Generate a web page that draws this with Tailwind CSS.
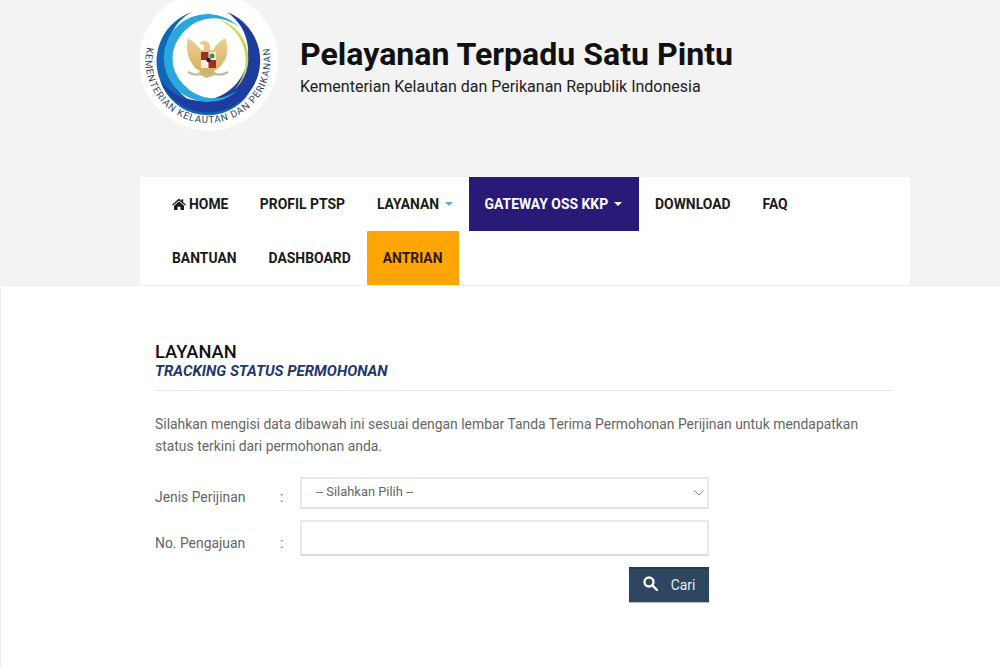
<!DOCTYPE html>
<html>
<head>
<meta charset="utf-8">
<script src="https://cdn.jsdelivr.net/npm/@tailwindcss/browser@4"></script>
</head>
<body class="font-['Roboto',sans-serif] bg-white overflow-hidden">
<div class="w-[1000px] h-[667px] overflow-hidden flex flex-col">
  <div class="bg-[#f3f3f3] h-[285px] shrink-0 px-[140px]">
    <div class="h-[177px] flex items-start">
      <svg class="w-[138px] h-[140px] -mt-[9px] shrink-0" viewBox="140 -9 138 140">
        <defs>
          <path id="arc" d="M 147 47 A 62.5 62.5 0 1 0 269 47"/>
          <linearGradient id="gold" x1="0" y1="0" x2="0" y2="1"><stop offset="0" stop-color="#ecd092"/><stop offset="1" stop-color="#d3aa58"/></linearGradient>
        </defs>
        <circle cx="208.500" cy="61" r="69.500" fill="#fff"/>
        <path d="M 192 12 A 52 52 0 0 0 160 80 A 50 50 0 0 0 250 92 A 47 47 0 0 1 168 62 A 46 46 0 0 1 192 12 Z" fill="#1267b5"/>
        <path d="M 227 12 A 52 52 0 1 1 160 80 A 48.500 48.500 0 1 0 227 12 Z" fill="#1d3c9e"/>
        <path d="M 240 28 A 44 44 0 1 0 238 90 A 40 40 0 1 1 240 28 Z" fill="#2ba7e0"/>
        <path d="M 217 19 A 41 41 0 0 1 234 90 A 44 44 0 0 0 217 19 Z" fill="#c6d84c"/>
        <circle cx="208.500" cy="58.500" r="36" fill="#fff"/>
        <path d="M205 41 C202 40 200 42 200 44 L204 45 L204 50 L201 50 C198 46 193 41 188 38 C186 46 187 56 191 62 L195 68 L200 71 L198 74 L207 78 L217 74 L214 71 L220 67 L225 60 C228 53 228 45 225 38 C220 41 215 46 213 50 L210 50 C211 45 209 41 205 41Z" fill="url(#gold)"/>
        <path d="M188 72 Q194 76 201 74 Q208 77 215 74 Q222 76 228 72" fill="none" stroke="#b9bda0" stroke-width="2.200"/>
        <rect x="201" y="52" width="15" height="16" fill="#f6eddc"/>
        <rect x="201" y="52" width="7.500" height="8" fill="#a32a2a"/>
        <rect x="208.500" y="60" width="7.500" height="8" fill="#a32a2a"/>
        <circle cx="212" cy="56" r="2.500" fill="#3f8f4f"/>
        <circle cx="208.500" cy="60" r="2.200" fill="#222"/>
        <text font-family="Roboto, sans-serif" font-size="9.800" fill="#33475f"><textPath href="#arc" startOffset="0" textLength="222" lengthAdjust="spacing">KEMENTERIAN KELAUTAN DAN PERIKANAN</textPath></text>
      </svg>
      <div class="ml-[22px] mt-[36px]">
        <h1 class="text-[32.100px] leading-[36px] font-bold text-[#111]">Pelayanan Terpadu Satu Pintu</h1>
        <p class="text-[16px] leading-[20px] mt-[5px] text-[#222]">Kementerian Kelautan dan Perikanan Republik Indonesia</p>
      </div>
    </div>
    <nav class="bg-white h-[108px] w-[770px] text-[13.900px] font-bold text-[#1a1a1a] flex flex-col shadow-[0_1px_1px_rgba(0,0,0,.04)]">
      <div class="flex h-[54px] items-stretch">
        <a class="pl-[32px] pr-[16px] flex items-center gap-[3px]">
          <svg class="w-[14px] h-[12px]" viewBox="0 0 14 12" fill="#1a1a1a"><path d="M7 0.500 L9.500 2.700 V1.200 H11.200 V4.200 L14 6.700 L13.100 7.600 L7 2.400 L0.900 7.600 L0 6.700Z"/><path d="M7 3.500 L12 7.700 V12 H8.500 V8.700 H5.500 V12 H2 V7.700Z"/></svg>
          HOME</a>
        <a class="pl-[15.500px] pr-[16px] flex items-center">PROFIL PTSP</a>
        <a class="px-[16px] flex items-center gap-[5.500px]">LAYANAN <span class="w-0 h-0 border-x-[4.500px] border-x-transparent border-t-[4px] border-t-[#5aa9d6]"></span></a>
        <a class="pl-[16px] pr-[17px] flex items-center gap-[6px] bg-[#2a1a78] text-white">GATEWAY OSS KKP <span class="w-0 h-0 border-x-[4.500px] border-x-transparent border-t-[4px] border-t-white"></span></a>
        <a class="px-[16px] flex items-center">DOWNLOAD</a>
        <a class="px-[16px] flex items-center">FAQ</a>
      </div>
      <div class="flex h-[54px] items-stretch">
        <a class="pl-[32px] pr-[16px] flex items-center">BANTUAN</a>
        <a class="px-[16px] flex items-center">DASHBOARD</a>
        <a class="pl-[16px] pr-[16.500px] flex items-center bg-[#ffa505] text-[#2d1a12]">ANTRIAN</a>
      </div>
    </nav>
  </div>
  <main class="flex-1 bg-white border-t border-[#efefef] border-l pl-[154px] pr-[106px] pt-[55px]">
    <h2 class="text-[18.300px] leading-[22px] font-medium text-[#111]">LAYANAN</h2>
    <h3 class="text-[15px] leading-[17px] font-bold italic text-[#22386b]">TRACKING STATUS PERMOHONAN</h3>
    <div class="border-b border-[#e8e8e8] mt-[10px]"></div>
    <p class="text-[13.920px] leading-[22px] text-[#666] mt-[22px]">Silahkan mengisi data dibawah ini sesuai dengan lembar Tanda Terima Permohonan Perijinan untuk mendapatkan<br>status terkini dari permohonan anda.</p>
    <div class="mt-[20px] text-[13.900px] text-[#666]">
      <div class="flex items-center h-[32px]">
        <span class="w-[125px] pt-[8px]">Jenis Perijinan</span><span class="w-[20px] pt-[8px]">:</span>
        <div class="w-[409px] h-[32px] border-2 border-[#e8e8e8] border-b-[#e0e0e0] flex items-center justify-between pl-[14px] pr-[3px] text-[12.900px] pb-[3px]">
          <span>-- Silahkan Pilih --</span>
          <svg class="w-[10px] h-[6px] mt-[3px]" viewBox="0 0 10 6" fill="none" stroke="#888" stroke-width="1"><path d="M0.500 0.500 L5 5 L9.500 0.500"/></svg>
        </div>
      </div>
      <div class="flex items-center h-[36px] mt-[11px]">
        <span class="w-[125px] pt-[10px]">No. Pengajuan</span><span class="w-[20px] pt-[10px]">:</span>
        <div class="w-[409px] h-[36px] border-2 border-[#e8e8e8] border-b-[#dcdcdc]"></div>
      </div>
      <div class="w-[554px] flex justify-end mt-[11px]">
        <button class="w-[80px] h-[35px] bg-[#2f4660] text-[#e8edf2] border-t-2 border-[#25394f] flex items-center justify-center gap-[13px] shadow-[0_1px_1px_rgba(0,0,0,.25)]">
          <svg class="w-[15px] h-[15px] -mt-[4px]" viewBox="0 0 15 15" fill="none" stroke="#fff" stroke-width="2.400"><circle cx="6" cy="6" r="4.500"/><path d="M9.500 9.500 L14 14" stroke-linecap="round"/></svg>
          <span>Cari</span>
        </button>
      </div>
    </div>
  </main>
</div>
</body>
</html>
